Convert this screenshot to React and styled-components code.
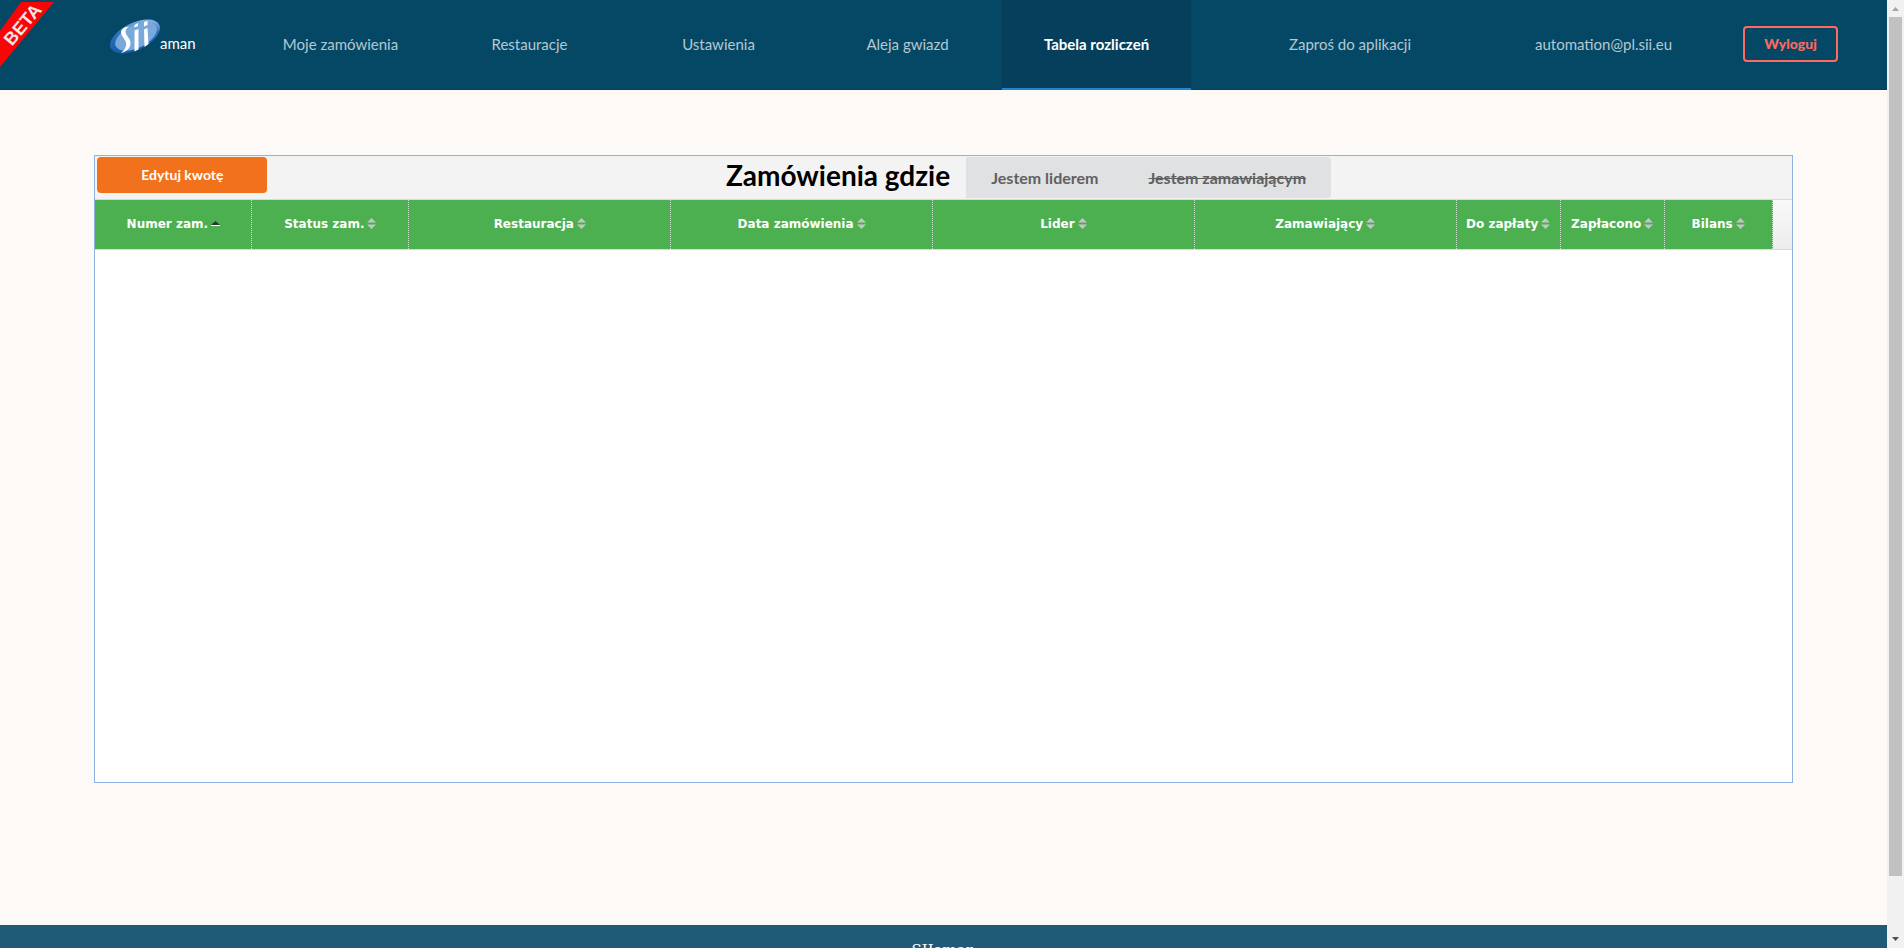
import React from "react";
import styled, { createGlobalStyle, css } from "styled-components";

const GlobalStyle = createGlobalStyle`
  *, *::before, *::after { box-sizing: border-box; }
  body {
    margin: 0;
    background: #fdf9f6;
    font-family: Lato, "Open Sans", sans-serif;
    font-size: 15px;
  }
`;

const Shell = styled.div`
  display: flex;
  height: 100vh;
  overflow: hidden;
`;

const Viewport = styled.div`
  flex: 1;
  min-width: 0;
  overflow-y: auto;
  scrollbar-width: none;
`;

const Header = styled.header`
  display: flex;
  height: 90px;
  background: #054866;
  box-shadow: inset 0 -1px #053f5b;
`;

const Ribbon = styled.svg`
  position: absolute;
  top: 0;
  left: 0;
  width: 56px;
  height: 70px;
`;

const Brand = styled.a`
  display: flex;
  flex: 0 0 246px;
  align-items: flex-start;
  padding: 19px 0 0 110px;
  color: #fff;
  line-height: 48px;
  text-decoration: none;
`;

const Logo = styled.svg`
  width: 50px;
  height: 35px;
`;

const Nav = styled.nav`
  display: flex;
  flex: 1;
`;

const NavItem = styled.a`
  display: flex;
  flex: ${(p) => (p.$wide ? "1" : "0 0 189px")};
  align-items: center;
  justify-content: center;
  height: 90px;
  border-bottom: 2px solid transparent;
  color: #b4c8d1;
  text-decoration: none;
  ${(p) =>
    p.$active &&
    css`
      background: #053f5b;
      color: #fff;
      font-weight: 700;
      border-bottom-color: #2185d0;
    `}
`;

const LogoutCell = styled.div`
  display: flex;
  flex: 0 0 189px;
  align-items: center;
  justify-content: center;
  height: 88px;
  padding-right: 4px;
`;

const LogoutButton = styled.button`
  height: 36px;
  width: 95px;
  padding: 0 0 2px;
  border: 2px solid #ff695e;
  border-radius: 4px;
  background: transparent;
  color: #ff695e;
  font: 900 14px Lato, sans-serif;
`;

const Main = styled.main`
  padding: 65px 5% 142px;
`;

const Panel = styled.section`
  height: 628px;
  border: 1px solid #8db2e3;
  background: #fff;
`;

const Toolbar = styled.div`
  display: flex;
  align-items: flex-start;
  height: 44px;
  padding: 1px 2px;
  background: #f3f3f3;
  border-bottom: 1px solid #d9d9d9;
`;

const EditButton = styled.button`
  width: 170px;
  height: 36px;
  padding: 0 0 2px;
  border: 0;
  border-radius: 4px;
  background: #f2711c;
  color: #fff;
  font: 700 14px Lato, sans-serif;
`;

const ToolbarCenter = styled.div`
  display: flex;
  flex: 1;
  justify-content: center;
  gap: 16px;
`;

const Title = styled.h1`
  margin: 0;
  font-size: 28px;
  font-weight: 700;
  line-height: 36px;
`;

const Segment = styled.div`
  display: flex;
  height: 41px;
  border-radius: 0 4px 4px 0;
  background: #e0e1e2;
`;

const SegmentButton = styled.button`
  padding: 0 25px 1px;
  border: 0;
  background: transparent;
  color: #5f6061;
  font: 700 16px Lato, sans-serif;
  text-decoration: ${(p) => (p.$off ? "line-through" : "none")};
`;

const GridHead = styled.div`
  height: 50px;
  padding-right: 19px;
  border-bottom: 1px solid #d9d9d9;
  background: linear-gradient(#f9f9f9, #ececec);
`;

const Table = styled.table`
  width: 100%;
  table-layout: fixed;
  border-collapse: separate;
  border-spacing: 0;
`;

const Col = styled.col`
  width: ${(p) => p.$width};
`;

const HeadCell = styled.th`
  height: 49px;
  padding: 0 0 2px;
  border-right: 1px dotted #c5e3c6;
  background: #4caf50;
  color: #fff;
  font: 700 12px "DejaVu Sans", Verdana, sans-serif;
  white-space: nowrap;
`;

const SortIcon = styled.svg`
  width: 9px;
  height: 11px;
  margin-left: 3px;
  vertical-align: -1px;
`;

const Footer = styled.footer`
  height: 200px;
  padding-top: 13px;
  background: #1f5a76;
  color: #fff;
  font: 15px/24px "DejaVu Serif", serif;
  text-align: center;
`;

const ScrollTrack = styled.div`
  display: flex;
  flex: 0 0 17px;
  flex-direction: column;
  align-items: center;
  justify-content: space-between;
  background: #f1f1f1;
`;

const ScrollArrow = styled.svg`
  width: 17px;
  height: 17px;
`;

const ScrollThumb = styled.div`
  flex: 0 0 859px;
  width: 13px;
  margin-bottom: auto;
  background: #c1c1c1;
`;

const navItems = [
  { label: "Moje zamówienia" },
  { label: "Restauracje" },
  { label: "Ustawienia" },
  { label: "Aleja gwiazd" },
  { label: "Tabela rozliczeń", active: true },
  { label: "Zaproś do aplikacji", wide: true },
  { label: "automation@pl.sii.eu" },
];

const columns = [
  { label: "Numer zam.", width: "157px", sorted: true },
  { label: "Status zam.", width: "157px" },
  { label: "Restauracja", width: "auto" },
  { label: "Data zamówienia", width: "auto" },
  { label: "Lider", width: "auto" },
  { label: "Zamawiający", width: "auto" },
  { label: "Do zapłaty", width: "104px" },
  { label: "Zapłacono", width: "104px" },
  { label: "Bilans", width: "108px" },
];

function Sort({ sorted }) {
  return (
    <SortIcon viewBox="0 0 9 11" aria-hidden="true">
      {sorted ? (
        <>
          <path d="M0 7 L4.5 3 L9 7Z" fill="#333" />
          <path d="M0 7h9v1H0z" fill="#fff" />
        </>
      ) : (
        <path d="M0 4.5 L4.5 0 L9 4.5Z M0 6.5 L4.5 11 L9 6.5Z" fill="#c4c4c4" />
      )}
    </SortIcon>
  );
}

export default function App() {
  return (
    <Shell>
      <GlobalStyle />
      <Viewport>
        <Header>
          <Ribbon viewBox="0 0 56 70" role="img" aria-label="BETA">
            <path d="M21 2H54L0 67V31Z" fill="#f90505" />
            <text
              x="22"
              y="31"
              transform="rotate(-50 22 24)"
              textAnchor="middle"
              fontFamily="Liberation Sans, sans-serif"
              fontWeight="700"
              fontSize="18"
              fill="#f4e4e4"
            >
              BETA
            </text>
          </Ribbon>
          <Brand href="#">
            <Logo viewBox="0 0 50 35" aria-hidden="true">
              <defs>
                <linearGradient id="rim" x1="0" y1="1" x2="1" y2="0">
                  <stop offset="0" stopColor="#1153a0" />
                  <stop offset="0.6" stopColor="#2f74c0" />
                  <stop offset="1" stopColor="#c4dcf3" />
                </linearGradient>
              </defs>
              <ellipse cx="25" cy="17.5" rx="27" ry="13.5" transform="rotate(-26 25 17.5)" fill="url(#rim)" />
              <ellipse cx="26" cy="17.5" rx="22.5" ry="11.5" transform="rotate(-26 26 17.5)" fill="#79a9dc" />
              <path d="M20 7.5C14 7.5 9.5 11 11.5 15.5C13 19.5 17.5 22 16 27C15 30.5 13 32.5 11 34C16 33 20.5 29.5 20.5 24C20.5 19 15.5 16.5 15.5 12.5C15.5 10 17.5 8.5 20 7.5Z" fill="#fff" />
              <path d="M24.5 11.5L28.5 10V30.5L24.5 32.5ZM34 10.5L37.5 9L38.5 25L34.5 28ZM24.5 6L28 4V7L24.5 8.5ZM34 3L37.5 2V6L34 7.5Z" fill="#fff" />
            </Logo>
            aman
          </Brand>
          <Nav>
            {navItems.map((item) => (
              <NavItem key={item.label} href="#" $active={item.active} $wide={item.wide}>
                {item.label}
              </NavItem>
            ))}
            <LogoutCell>
              <LogoutButton type="button">Wyloguj</LogoutButton>
            </LogoutCell>
          </Nav>
        </Header>
        <Main>
          <Panel>
            <Toolbar>
              <EditButton type="button">Edytuj kwotę</EditButton>
              <ToolbarCenter>
                <Title>Zamówienia gdzie</Title>
                <Segment>
                  <SegmentButton type="button">Jestem liderem</SegmentButton>
                  <SegmentButton type="button" $off>
                    Jestem zamawiającym
                  </SegmentButton>
                </Segment>
              </ToolbarCenter>
            </Toolbar>
            <GridHead>
              <Table>
                <colgroup>
                  {columns.map((c) => (
                    <Col key={c.label} $width={c.width} />
                  ))}
                </colgroup>
                <thead>
                  <tr>
                    {columns.map((c) => (
                      <HeadCell key={c.label} scope="col">
                        {c.label}
                        <Sort sorted={c.sorted} />
                      </HeadCell>
                    ))}
                  </tr>
                </thead>
              </Table>
            </GridHead>
          </Panel>
        </Main>
        <Footer>SIIaman</Footer>
      </Viewport>
      <ScrollTrack aria-hidden="true">
        <ScrollArrow viewBox="0 0 17 17">
          <path d="M5 11L8.5 7L12 11Z" fill="#a3a3a3" />
        </ScrollArrow>
        <ScrollThumb />
        <ScrollArrow viewBox="0 0 17 17">
          <path d="M5 6L8.5 10L12 6Z" fill="#505050" />
        </ScrollArrow>
      </ScrollTrack>
    </Shell>
  );
}
